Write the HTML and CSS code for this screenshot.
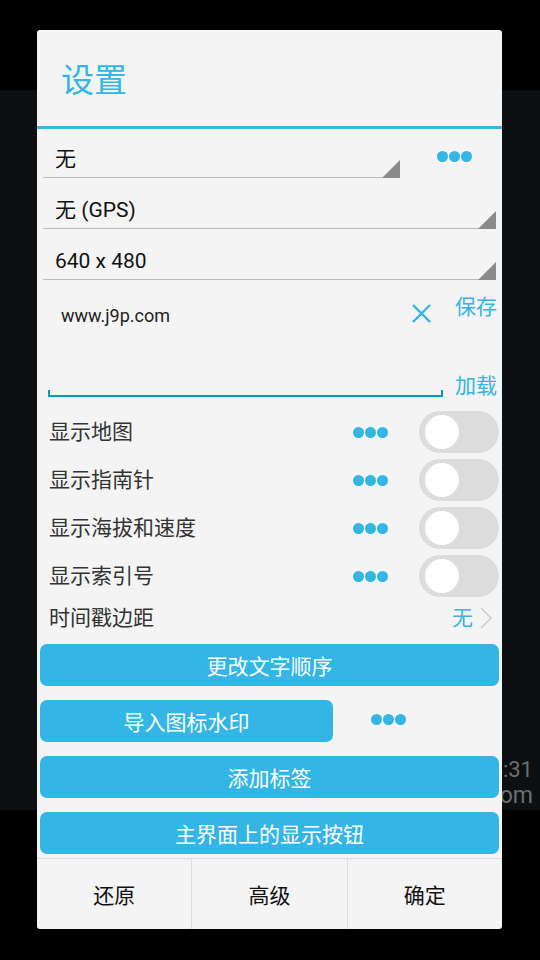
FILE: index.html
```html
<!DOCTYPE html>
<html lang="zh-CN">
<head>
<meta charset="utf-8">
<title>设置</title>
<link rel="stylesheet" href="styles.css">
</head>
<body>
<div class="screen">
  <div class="bar-top"></div>
  <div class="backdrop">
    <div class="bg-line small">2016-05-10 15:31</div>
    <div class="bg-line big">www.j9p.com</div>
  </div>
  <div class="bar-bottom"></div>
</div>

<div class="dialog">
  <div class="title">设置</div>
  <div class="divider"></div>

  <div class="spin-row">
    <div class="spinner short"><span class="spin-text">无</span><span class="tri"></span></div>
    <div class="dots top"><i></i><i></i><i></i></div>
  </div>
  <div class="spinner full"><span class="spin-text">无 (GPS)</span><span class="tri"></span></div>
  <div class="spinner full"><span class="spin-text">640 x 480</span><span class="tri"></span></div>

  <div class="edit-row">
    <div class="edit">
      <div class="edit-top">
        <span class="edit-text">www.j9p.com</span>
        <svg class="clear" width="19" height="19" viewBox="0 0 19 19"><path d="M1 1 L18 18 M18 1 L1 18" stroke="#33b5e5" stroke-width="2.4" fill="none"/></svg>
      </div>
      <div class="edit-line"></div>
    </div>
    <div class="edit-actions">
      <span class="link">保存</span>
      <span class="link">加载</span>
    </div>
  </div>

  <div class="toggle-row">
    <span class="label">显示地图</span>
    <div class="dots"><i></i><i></i><i></i></div>
    <div class="toggle"><span class="knob"></span></div>
  </div>
  <div class="toggle-row">
    <span class="label">显示指南针</span>
    <div class="dots"><i></i><i></i><i></i></div>
    <div class="toggle"><span class="knob"></span></div>
  </div>
  <div class="toggle-row">
    <span class="label">显示海拔和速度</span>
    <div class="dots"><i></i><i></i><i></i></div>
    <div class="toggle"><span class="knob"></span></div>
  </div>
  <div class="toggle-row">
    <span class="label">显示索引号</span>
    <div class="dots"><i></i><i></i><i></i></div>
    <div class="toggle"><span class="knob"></span></div>
  </div>

  <div class="margin-row">
    <span class="label">时间戳边距</span>
    <span class="value">无</span>
    <svg class="chev" width="12" height="22" viewBox="0 0 12 22"><path d="M1 1 L11 11 L1 21" stroke="#c8c8c8" stroke-width="1.3" fill="none"/></svg>
  </div>

  <div class="buttons">
    <div class="btn">更改文字顺序</div>
    <div class="btn-row">
      <div class="btn half">导入图标水印</div>
      <div class="dots"><i></i><i></i><i></i></div>
    </div>
    <div class="btn">添加标签</div>
    <div class="btn">主界面上的显示按钮</div>
  </div>

  <div class="action-bar">
    <div class="action">还原</div>
    <div class="action">高级</div>
    <div class="action">确定</div>
  </div>
</div>
</body>
</html>
```

FILE: styles.css
```css
* { box-sizing: border-box; }
html, body { margin: 0; padding: 0; }
body {
  width: 540px;
  height: 960px;
  background: #000;
  font-family: "Roboto", "Noto Sans CJK SC", sans-serif;
  position: relative;
  overflow: hidden;
}
.screen { display: flex; flex-direction: column; height: 960px; }
.bar-top { height: 90px; background: #000; }
.backdrop {
  height: 720px;
  background: #0d1013;
  display: flex;
  flex-direction: column;
  justify-content: flex-end;
  align-items: flex-end;
  padding: 0 7px 1px 0;
  color: #6e6e6e;
}
.bg-line.small { font-size: 22px; line-height: 24px; margin-bottom: 0; }
.bg-line.big { font-size: 23px; line-height: 27px; }
.bar-bottom { flex: 1; background: #000; }

.dialog {
  position: absolute;
  left: 37px;
  top: 30px;
  width: 465px;
  height: 899px;
  background: #f4f4f4;
  border-radius: 3px;
  overflow: hidden;
  display: flex;
  flex-direction: column;
}
.title {
  height: 96px;
  padding-left: 24px;
  display: flex;
  align-items: center;
  font-size: 33px;
  color: #33b5e5;
}
.divider { height: 3px; background: #33b5e5; }

.dots { display: flex; flex: none; }
.dots i {
  width: 11px; height: 11px; border-radius: 50%;
  background: #33b5e5; display: block;
}
.dots i + i { margin-left: 1px; }

.spin-row { display: flex; height: 49px; }
.spinner {
  display: flex;
  align-items: flex-end;
  justify-content: space-between;
  border-bottom: 1px solid #bcbcbc;
  margin-left: 6px;
}
.spinner.short { width: 357px; height: 49px; }
.spinner.full { width: 453px; height: 51px; }
.spin-text {
  font-size: 21px;
  line-height: 24px;
  color: #111;
  padding-left: 12px;
  margin-bottom: 6px;
}
.tri {
  width: 18px; height: 18px;
  background: #8a8a8a;
  clip-path: polygon(100% 0, 100% 100%, 0 100%);
  margin-bottom: -1px;
}
.dots.top { margin-left: 37px; margin-top: 22px; }

.edit-row { display: flex; height: 118px; }
.edit {
  margin-left: 11px;
  width: 395px;
  height: 117px;
  display: flex;
  flex-direction: column;
  justify-content: space-between;
  padding-top: 25px;
}
.edit-top { display: flex; justify-content: space-between; align-items: flex-start; padding: 0 12px 0 13px; }
.edit-text { font-size: 18px; line-height: 22px; color: #1e1e1e; }
.clear { margin-top: -1px; }
.edit-line {
  height: 7px;
  border: 2px solid #0099cc;
  border-top: none;
}
.edit-actions {
  margin-left: 12px;
  display: flex;
  flex-direction: column;
  justify-content: space-between;
  padding-top: 15px;
}
.link { font-size: 21px; line-height: 24px; color: #33b5e5; }

.toggle-row {
  margin-top: 0;
  height: 48px;
  display: flex;
  align-items: center;
  padding: 0 3px 0 12px;
}
.edit-row + .toggle-row { margin-top: 10px; }
.label { flex: 1; font-size: 21px; line-height: 24px; color: #333; }
.toggle {
  margin-left: 31px;
  width: 80px; height: 42px;
  border-radius: 21px;
  background: #dcdcdc;
  display: flex; align-items: center;
  padding-left: 6px;
}
.knob { width: 34px; height: 34px; border-radius: 50%; background: #fff; }

.margin-row {
  height: 36px;
  display: flex;
  align-items: center;
  padding: 0 10px 0 12px;
}
.value { font-size: 21px; line-height: 24px; color: #33b5e5; margin-right: 7px; }

.buttons {
  display: flex;
  flex-direction: column;
  gap: 14px;
  padding: 8px 3px 4px 3px;
}
.btn {
  height: 42px;
  border-radius: 7px;
  background: #33b5e5;
  color: #fff;
  font-size: 21px;
  display: flex; align-items: center; justify-content: center;
}
.btn-row { display: flex; align-items: center; }
.btn.half { width: 293px; }
.btn-row .dots { margin-left: 38px; margin-top: -3px; }

.action-bar {
  border-top: 1px solid #dcdcdc;
  height: 71px;
  display: flex;
}
.action {
  flex: 1;
  display: flex; align-items: center; justify-content: center;
  font-size: 21px;
  color: #111;
}
.action + .action { border-left: 1px solid #dcdcdc; }
```
